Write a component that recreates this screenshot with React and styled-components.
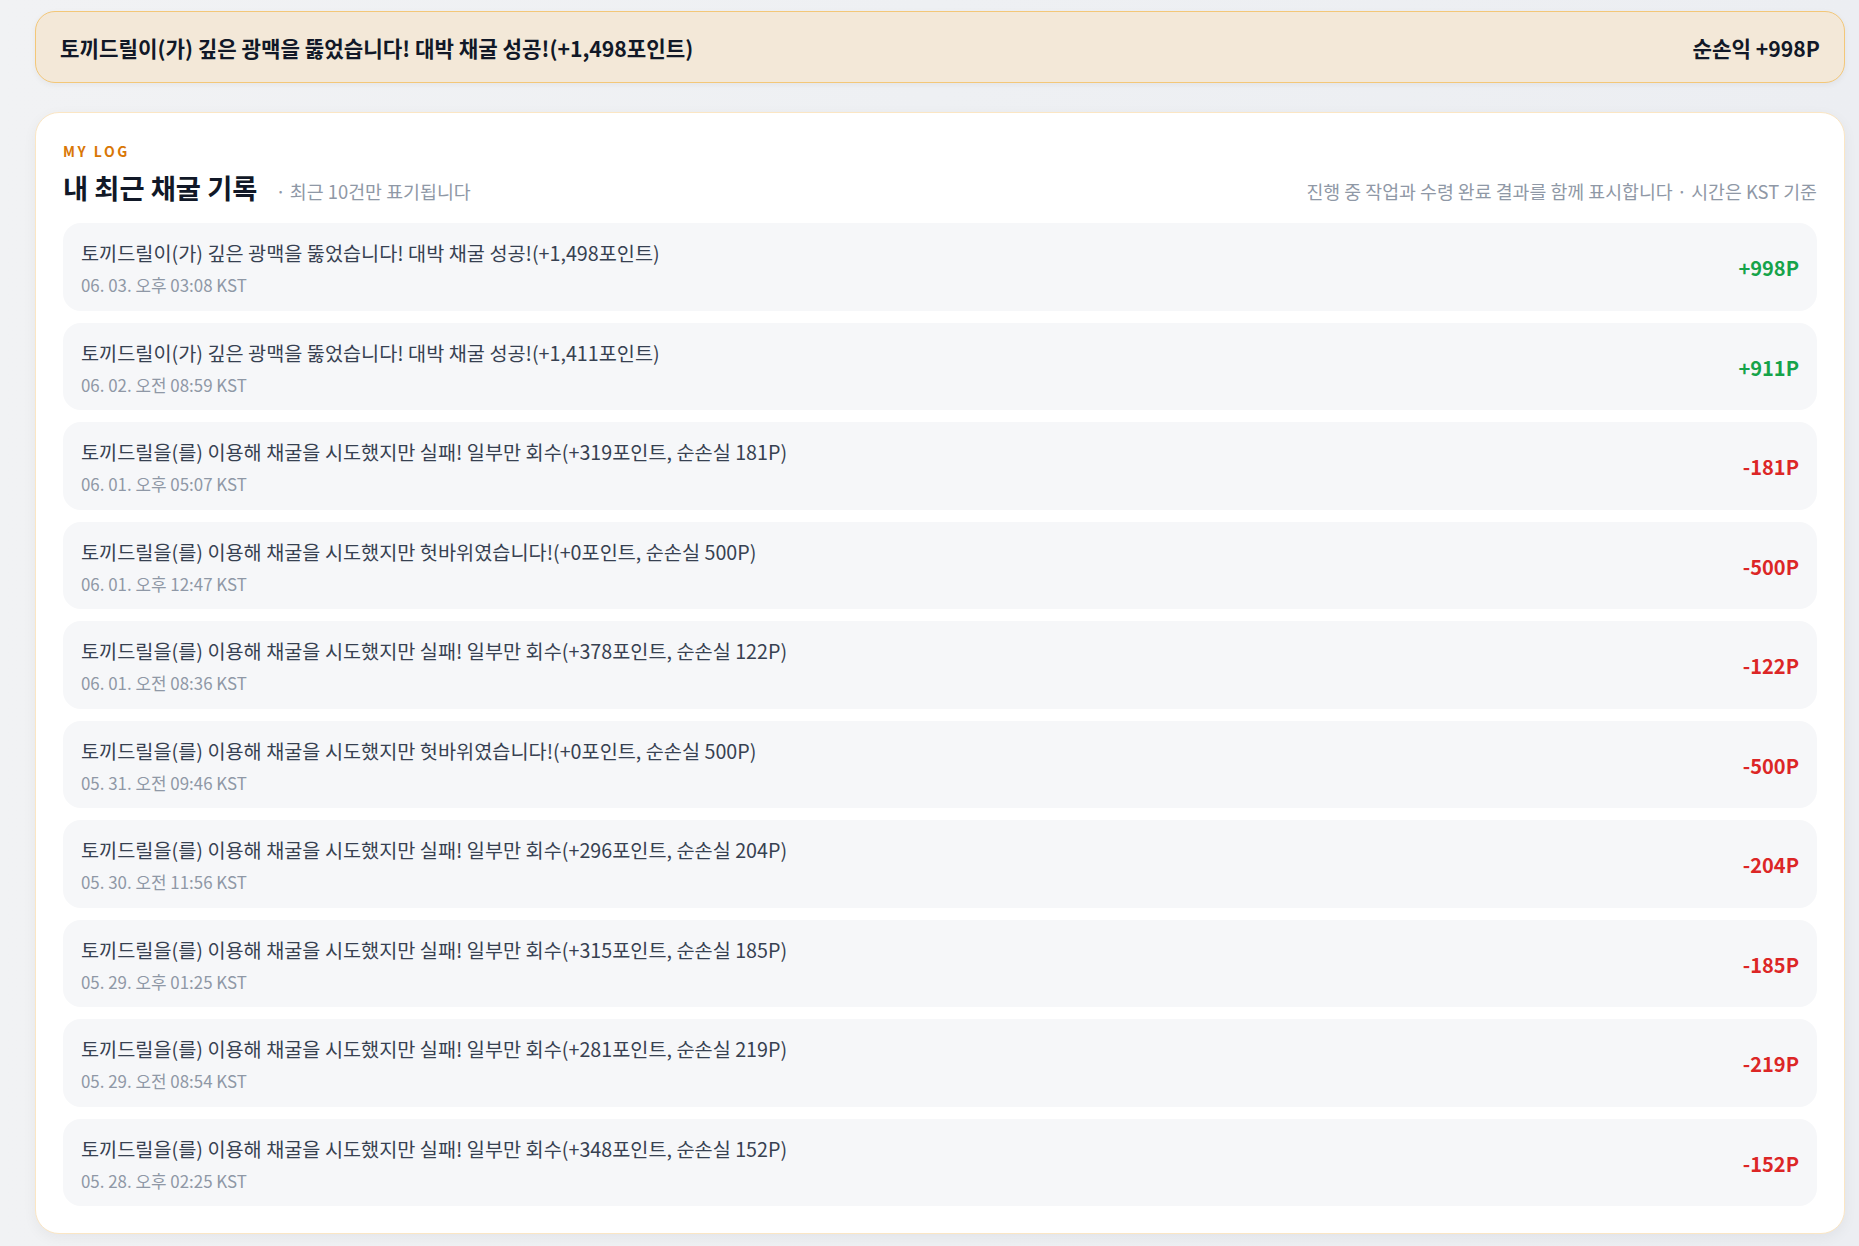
import React from 'react'
import styled, { createGlobalStyle } from 'styled-components'

const GlobalStyle = createGlobalStyle`
  * {
    box-sizing: border-box;
  }
  body {
    margin: 0;
    background: #eef0f3;
    font-family: 'Noto Sans CJK KR', 'Noto Sans', sans-serif;
    color: #111827;
  }
`

const FAIL = '토끼드릴을(를) 이용해 채굴을 시도했지만 실패! 일부만 회수'
const DUD = '토끼드릴을(를) 이용해 채굴을 시도했지만 헛바위였습니다!'
const JACKPOT = '토끼드릴이(가) 깊은 광맥을 뚫었습니다! 대박 채굴 성공!'

const logs = [
  { msg: `${JACKPOT}(+1,498포인트)`, time: '06. 03. 오후 03:08 KST', net: 998 },
  { msg: `${JACKPOT}(+1,411포인트)`, time: '06. 02. 오전 08:59 KST', net: 911 },
  { msg: `${FAIL}(+319포인트, 순손실 181P)`, time: '06. 01. 오후 05:07 KST', net: -181 },
  { msg: `${DUD}(+0포인트, 순손실 500P)`, time: '06. 01. 오후 12:47 KST', net: -500 },
  { msg: `${FAIL}(+378포인트, 순손실 122P)`, time: '06. 01. 오전 08:36 KST', net: -122 },
  { msg: `${DUD}(+0포인트, 순손실 500P)`, time: '05. 31. 오전 09:46 KST', net: -500 },
  { msg: `${FAIL}(+296포인트, 순손실 204P)`, time: '05. 30. 오전 11:56 KST', net: -204 },
  { msg: `${FAIL}(+315포인트, 순손실 185P)`, time: '05. 29. 오후 01:25 KST', net: -185 },
  { msg: `${FAIL}(+281포인트, 순손실 219P)`, time: '05. 29. 오전 08:54 KST', net: -219 },
  { msg: `${FAIL}(+348포인트, 순손실 152P)`, time: '05. 28. 오후 02:25 KST', net: -152 },
]

const formatNet = (n) => (n >= 0 ? `+${n}P` : `-${Math.abs(n)}P`)

const App = () => {
  const latest = logs[0]
  return (
    <Page>
      <GlobalStyle />
      <Banner>
        <span>{latest.msg}</span>
        <strong>순손익 {formatNet(latest.net)}</strong>
      </Banner>

      <Card>
        <Eyebrow>MY LOG</Eyebrow>
        <HeaderRow>
          <TitleGroup>
            <Title>내 최근 채굴 기록</Title>
            <SubNote>· 최근 10건만 표기됩니다</SubNote>
          </TitleGroup>
          <SideNote>진행 중 작업과 수령 완료 결과를 함께 표시합니다 · 시간은 KST 기준</SideNote>
        </HeaderRow>

        <LogList>
          {logs.map((log, i) => (
            <LogRow key={i}>
              <div>
                <LogMsg>{log.msg}</LogMsg>
                <LogTime>{log.time}</LogTime>
              </div>
              <Amount $gain={log.net >= 0}>{formatNet(log.net)}</Amount>
            </LogRow>
          ))}
        </LogList>
      </Card>
    </Page>
  )
}

const Page = styled.main`
  min-height: 100vh;
  padding: 11px 14px 13px 35px;
  display: flex;
  flex-direction: column;
  gap: 29px;
  background: linear-gradient(90deg, #f1f2f4 0%, #eef0f3 50%, #eceef2 100%);
`

const Banner = styled.div`
  height: 72px;
  padding: 0 24px;
  display: flex;
  align-items: center;
  justify-content: space-between;
  background: #f3e8d8;
  border: 1px solid #f3c778;
  border-radius: 20px;
  box-shadow: 0 2px 6px rgba(15, 23, 42, 0.05);
  font-size: 21.2px;
  font-weight: 700;
  color: #111827;

  strong {
    font-weight: 700;
  }
`

const Card = styled.section`
  background: #ffffff;
  border: 1px solid #fbe6c4;
  border-radius: 24px;
  padding: 28px 27px 27px;
  box-shadow: 0 4px 14px rgba(15, 23, 42, 0.05);
`

const Eyebrow = styled.div`
  font-size: 14px;
  line-height: 20px;
  font-weight: 700;
  letter-spacing: 0.18em;
  color: #d97706;
`

const HeaderRow = styled.div`
  margin: 8px 0 18px;
  display: flex;
  align-items: flex-end;
  justify-content: space-between;
`

const TitleGroup = styled.div`
  display: flex;
  align-items: baseline;
  gap: 18px;
`

const Title = styled.h2`
  margin: 0;
  font-size: 27.3px;
  line-height: 36px;
  font-weight: 700;
  color: #111827;
`

const SubNote = styled.span`
  font-size: 18.4px;
  color: #8f98a6;
`

const SideNote = styled.span`
  font-size: 18.35px;
  line-height: 28px;
  color: #8f98a6;
`

const LogList = styled.div`
  display: flex;
  flex-direction: column;
  gap: 12px;
`

const LogRow = styled.div`
  display: flex;
  align-items: center;
  justify-content: space-between;
  padding: 16px 18px 14.5px;
  background: #f6f7f9;
  border-radius: 18px;
`

const LogMsg = styled.div`
  font-size: 19.7px;
  line-height: 28px;
  color: #374151;
`

const LogTime = styled.div`
  margin-top: 7px;
  font-size: 16.9px;
  line-height: 22px;
  color: #8f98a6;
`

const Amount = styled.span`
  font-size: 20px;
  font-weight: 700;
  color: ${(p) => (p.$gain ? '#16a34a' : '#dc2626')};
`

export default App
